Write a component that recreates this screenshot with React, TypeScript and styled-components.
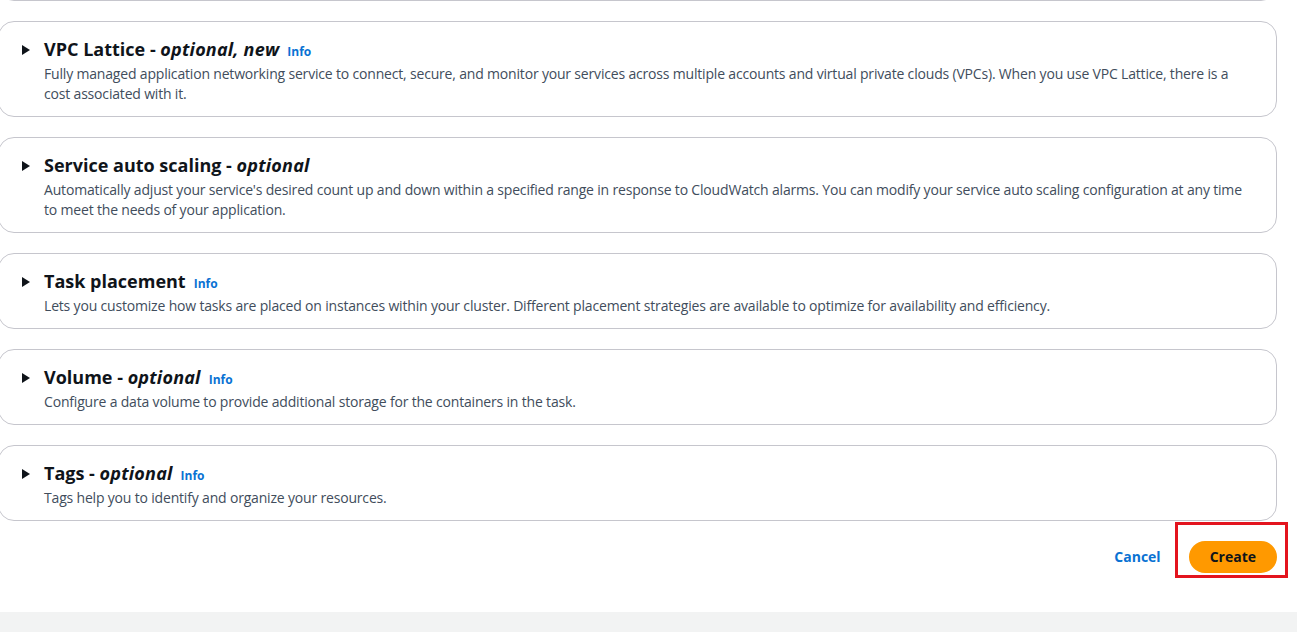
import React from "react";
import styled, { createGlobalStyle } from "styled-components";

const GlobalStyle = createGlobalStyle`
  html, body {
    margin: 0;
    padding: 0;
    background: #ffffff;
    font-family: "Open Sans", "Noto Sans", Arial, sans-serif;
    color: #0f141a;
  }
`;

const Page = styled.div`
  width: 1297px;
  height: 632px;
  overflow: hidden;
  display: flex;
  flex-direction: column;
`;

const Content = styled.div`
  display: flex;
  flex-direction: column;
  gap: 20px;
  margin-left: -2px;
  padding-right: 20px;
`;

const PrevCardEdge = styled.div`
  height: 30px;
  margin-top: -31px;
  border: 1px solid #c6c6cd;
  border-radius: 16px;
  background: #fff;
`;

const Card = styled.section`
  border: 1px solid #c6c6cd;
  border-radius: 16px;
  background: #fff;
  padding: 15px 20px 12px 22px;
  display: flex;
  gap: 12px;
`;

const Caret = styled.svg`
  flex: none;
  width: 10px;
  height: 12px;
  margin-top: 7px;
`;

const CardBody = styled.div`
  display: flex;
  flex-direction: column;
  margin-left: 1px;
`;

const Heading = styled.h2`
  margin: 0 0 3px;
  font-size: 18px;
  line-height: 24px;
  height: 24px;
  font-weight: 700;
  color: #0f141a;
  white-space: nowrap;
`;

const Optional = styled.em`
  font-style: italic;
  font-weight: 700;
  letter-spacing: 0.2px;
`;

const InfoLink = styled.a`
  margin-left: 8px;
  font-size: 12px;
  line-height: 16px;
  font-weight: 700;
  color: #0972d3;
  text-decoration: none;
`;

const Description = styled.p`
  margin: 0;
  font-size: 14px;
  line-height: 20px;
  color: #414d5c;
  letter-spacing: -0.18px;
`;

const Footer = styled.div`
  display: flex;
  justify-content: flex-end;
  align-items: center;
  gap: 8px;
  padding: 20px 20px 0 0;
`;

const LinkButton = styled.button`
  background: none;
  border: none;
  font-family: inherit;
  font-size: 14px;
  font-weight: 700;
  color: #0972d3;
  padding: 4px 20px;
  line-height: 20px;
  cursor: pointer;
`;

const Highlight = styled.div`
  position: relative;
  display: flex;
`;

const PrimaryButton = styled.button`
  background: #ff9900;
  border: 2px solid #ff9900;
  border-radius: 20px;
  font-family: inherit;
  font-size: 14px;
  font-weight: 700;
  color: #0f141a;
  padding: 4px 19px;
  line-height: 20px;
  cursor: pointer;
`;

const RedFrame = styled.div`
  position: absolute;
  left: -14px;
  top: -19px;
  right: -11px;
  bottom: -5px;
  border: 3px solid #e3141e;
  pointer-events: none;
`;

const Spacer = styled.div`
  flex: 1;
`;

const BottomBand = styled.div`
  height: 20px;
  background: #f2f3f3;
`;

type Section = {
  title: string;
  optional?: string;
  info?: boolean;
  description: string;
};

const sections: Section[] = [
  {
    title: "VPC Lattice",
    optional: "optional, new",
    info: true,
    description:
      "Fully managed application networking service to connect, secure, and monitor your services across multiple accounts and virtual private clouds (VPCs). When you use VPC Lattice, there is a cost associated with it.",
  },
  {
    title: "Service auto scaling",
    optional: "optional",
    description:
      "Automatically adjust your service's desired count up and down within a specified range in response to CloudWatch alarms. You can modify your service auto scaling configuration at any time to meet the needs of your application.",
  },
  {
    title: "Task placement",
    info: true,
    description:
      "Lets you customize how tasks are placed on instances within your cluster. Different placement strategies are available to optimize for availability and efficiency.",
  },
  {
    title: "Volume",
    optional: "optional",
    info: true,
    description:
      "Configure a data volume to provide additional storage for the containers in the task.",
  },
  {
    title: "Tags",
    optional: "optional",
    info: true,
    description: "Tags help you to identify and organize your resources.",
  },
];

const CaretIcon = () => (
  <Caret viewBox="0 0 10 12" aria-hidden="true">
    <path d="M1 1 L9 6 L1 11 Z" fill="#0f141a" />
  </Caret>
);

export default function App() {
  return (
    <Page>
      <GlobalStyle />
      <Content>
        <PrevCardEdge />
        {sections.map((s) => (
          <Card key={s.title}>
            <CaretIcon />
            <CardBody>
              <Heading>
                {s.title}
                {s.optional && (
                  <>
                    {" - "}
                    <Optional>{s.optional}</Optional>
                  </>
                )}
                {s.info && <InfoLink href="#">Info</InfoLink>}
              </Heading>
              <Description>{s.description}</Description>
            </CardBody>
          </Card>
        ))}
      </Content>
      <Footer>
        <LinkButton>Cancel</LinkButton>
        <Highlight>
          <PrimaryButton>Create</PrimaryButton>
          <RedFrame />
        </Highlight>
      </Footer>
      <Spacer />
      <BottomBand />
    </Page>
  );
}
